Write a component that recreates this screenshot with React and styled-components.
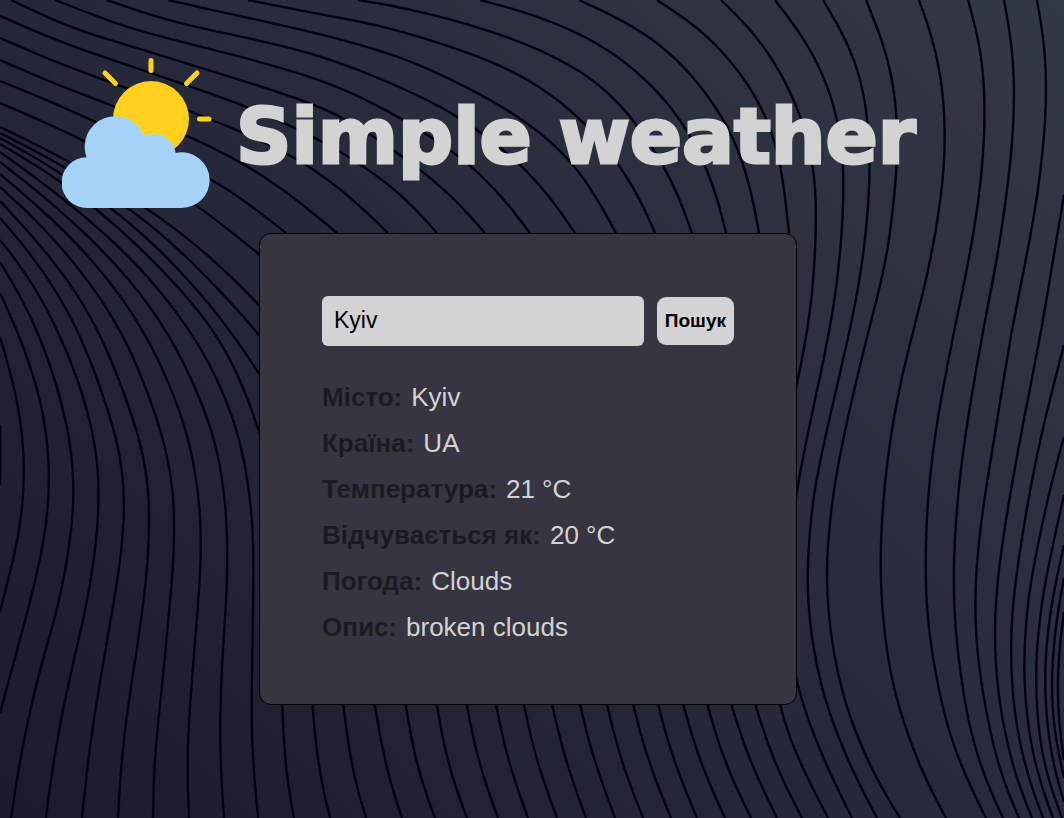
import React, { useState } from "react";
import styled, { createGlobalStyle } from "styled-components";

const GlobalStyle = createGlobalStyle`
  * {
    box-sizing: border-box;
  }
  body {
    margin: 0;
    background: #24263a;
    font-family: "Liberation Sans", Arial, sans-serif;
  }
`;

const Page = styled.main`
  position: relative;
  min-height: 100vh;
  padding: 58px 8px 62px 0;
  overflow: hidden;
`;

const Backdrop = styled.svg`
  position: absolute;
  inset: 0;
  width: 100%;
  height: 100%;
  z-index: -1;
`;

const Header = styled.header`
  display: flex;
  align-items: center;
  gap: 24px;
  padding-left: 62px;
`;

const Logo = styled.svg`
  flex: none;
  width: 150px;
  height: 150px;
`;

const Title = styled.h1`
  margin: 0;
  padding-top: 8px;
  color: lightgray;
  font-family: "DejaVu Sans", sans-serif;
  font-weight: 700;
  font-size: 77px;
  line-height: 112px;
  white-space: nowrap;
  -webkit-text-stroke: 3px lightgray;
`;

const Card = styled.section`
  width: 100%;
  max-width: 538px;
  margin: 25px auto 0;
  padding: 62px 62px 54px;
  background: #363541;
  border: 1px solid #000;
  border-radius: 12px;
`;

const SearchForm = styled.form`
  display: flex;
  align-items: center;
  gap: 13px;
`;

const SearchInput = styled.input`
  flex: 1;
  min-width: 0;
  height: 50px;
  padding: 0 12px 2px;
  background: lightgray;
  border: 0;
  border-radius: 6px;
  color: #000;
  font-family: inherit;
  font-size: 23px;
`;

const SearchButton = styled.button`
  height: 48px;
  padding: 0 8px;
  background: lightgray;
  border: 0;
  border-radius: 9px;
  color: #000;
  font-family: inherit;
  font-weight: 700;
  font-size: 19px;
  cursor: pointer;
`;

const Details = styled.dl`
  margin: 28px 0 0;
  font-size: 26px;
  line-height: 46px;
`;

const Detail = styled.div`
  display: flex;
  flex-wrap: wrap;
  column-gap: 9px;
`;

const Label = styled.dt`
  color: #1a1b22;
  font-weight: 700;
`;

const Value = styled.dd`
  margin: 0;
  color: lightgray;
`;

/* Each contour is a flat list of x, y pairs, joined by a smooth curve. */
const contours = [
  [1064, 195, 1053, 260, 1042, 327, 1030, 388, 1018, 450, 1008, 507, 1004, 530, 996, 590, 994, 647, 998, 697, 1008, 750, 1022, 797, 1032, 818],
  [1037, 0, 1045, 40, 1047, 83, 1045, 133, 1037, 200, 1026, 260, 1013, 323, 1003, 383, 992, 453, 985, 493, 980, 530, 975, 580, 975, 637, 982, 690, 993, 747, 1007, 793, 1019, 818],
  [1004, 0, 1012, 40, 1015, 87, 1013, 140, 1007, 193, 997, 260, 985, 320, 972, 393, 963, 450, 958, 493, 955, 530, 953, 580, 955, 630, 960, 673, 970, 733, 986, 783, 1003, 818],
  [968, 0, 980, 40, 985, 83, 985, 133, 980, 193, 969, 260, 957, 317, 945, 377, 935, 433, 928, 493, 926, 530, 925, 573, 927, 620, 935, 673, 947, 727, 962, 770, 986, 818],
  [919, 0, 933, 37, 942, 77, 946, 130, 943, 187, 931, 260, 917, 317, 903, 370, 893, 420, 885, 477, 881, 530, 880, 567, 882, 613, 888, 663, 898, 707, 912, 747, 930, 790, 946, 818],
  [866, 0, 883, 40, 893, 77, 898, 123, 897, 173, 887, 260, 873, 313, 858, 373, 845, 430, 833, 490, 829, 530, 826, 567, 827, 603, 833, 653, 843, 697, 858, 740, 880, 787, 900, 818],
  [823, 0, 843, 32, 860, 70, 868, 117, 871, 160, 868, 213, 863, 260, 853, 317, 839, 377, 824, 443, 813, 493, 810, 530, 807, 563, 807, 600, 812, 643, 820, 685, 835, 730, 855, 777, 877, 818],
  [775, 0, 800, 31, 820, 65, 833, 100, 841, 130, 844, 167, 844, 200, 840, 260, 833, 313, 820, 377, 807, 437, 797, 487, 790, 540, 786, 590, 788, 640, 797, 687, 815, 740, 835, 784, 852, 818],
  [721, 0, 750, 27, 773, 58, 790, 90, 805, 125, 813, 160, 817, 197, 815, 260, 812, 303, 805, 343, 797, 388, 780, 450, 768, 540, 768, 640, 778, 704, 796, 756, 828, 818],
  [657, 0, 693, 22, 727, 55, 760, 100, 775, 138, 783, 175, 789, 233],
  [579, 0, 620, 18, 660, 43, 693, 75, 727, 122, 742, 157, 752, 190, 759, 233],
  [480, 0, 520, 10, 560, 24, 600, 43, 633, 67, 667, 100, 693, 138, 707, 167, 718, 197, 726, 233],
  [358, 0, 387, 4, 447, 18, 497, 33, 530, 45, 560, 59, 593, 78, 620, 102, 640, 128, 665, 166, 680, 197, 692, 233],
  [248, 0, 313, 13, 380, 25, 447, 45, 497, 63, 530, 80, 560, 100, 590, 127, 620, 165, 640, 197, 655, 233],
  [168, 0, 230, 14, 313, 32, 397, 55, 447, 77, 497, 103, 530, 124, 560, 148, 580, 171, 600, 202, 616, 233],
  [107, 0, 167, 21, 230, 34, 313, 53, 380, 78, 420, 96, 460, 116, 492, 141, 522, 164, 553, 200, 575, 233],
  [55, 0, 127, 28, 230, 54, 297, 72, 350, 91, 412, 124, 471, 164, 503, 197, 530, 233],
  [11, 0, 67, 27, 150, 52, 230, 77, 267, 88, 333, 111, 365, 130, 400, 155, 425, 172, 457, 200, 485, 233],
  [0, 16, 60, 42, 133, 67, 230, 100, 290, 125, 345, 153, 403, 194, 437, 233],
  [0, 38, 50, 60, 115, 84, 187, 110, 230, 127, 267, 143, 297, 158, 320, 173, 357, 202, 388, 233],
  [0, 60, 50, 82, 113, 106, 187, 135, 230, 156, 263, 175, 300, 202, 337, 233],
  [0, 81, 50, 101, 95, 122, 160, 150, 230, 190, 260, 212, 286, 233],
  [0, 103, 40, 120, 83, 140, 150, 174, 197, 205, 229, 230, 260, 255],
  [0, 127, 30, 141, 62, 158, 120, 190, 178, 230, 222, 267, 260, 306],
  [0, 133, 40, 153, 80, 176, 120, 202, 158, 230, 194, 264, 230, 301, 260, 336],
  [0, 138, 35, 157, 70, 179, 105, 203, 139, 230, 175, 265, 215, 310, 240, 344, 260, 375],
  [0, 144, 30, 161, 60, 181, 92, 205, 121, 230, 157, 264, 199, 310, 225, 347, 245, 390, 260, 434],
  [0, 152, 50, 188, 101, 230, 136, 263, 173, 306, 203, 350, 222, 388, 241, 440, 251, 500, 254, 547, 253, 610, 252, 677, 251, 727, 254, 777, 258, 818],
  [0, 162, 40, 193, 82, 230, 115, 263, 151, 306, 178, 350, 196, 388, 216, 440, 226, 500, 228, 553, 226, 610, 222, 660, 220, 710, 220, 760, 224, 818],
  [0, 174, 32, 201, 64, 230, 95, 263, 129, 306, 156, 353, 173, 392, 190, 440, 200, 500, 202, 543, 199, 593, 193, 667, 188, 730, 187, 777, 189, 818],
  [0, 187, 24, 208, 46, 230, 75, 263, 107, 306, 131, 350, 147, 390, 166, 445, 175, 500, 174, 560, 168, 623, 162, 687, 156, 740, 153, 787, 153, 818],
  [0, 201, 27, 230, 55, 262, 86, 306, 109, 353, 123, 390, 141, 440, 150, 490, 149, 553, 142, 617, 132, 680, 125, 727, 120, 777, 118, 818],
  [0, 218, 9, 227, 36, 260, 66, 306, 87, 350, 101, 390, 117, 436, 125, 480, 125, 510, 122, 553, 113, 607, 102, 670, 92, 730, 85, 787, 82, 818],
  [0, 240, 17, 260, 36, 288, 53, 320, 75, 370, 88, 410, 97, 450, 100, 490, 99, 510, 95, 557, 85, 613, 73, 663, 60, 723, 50, 783, 46, 818],
  [0, 262, 28, 308, 50, 363, 63, 407, 72, 447, 75, 490, 74, 510, 68, 557, 57, 613, 43, 657, 27, 723, 17, 777, 11, 818],
  [0, 293, 23, 343, 37, 387, 46, 423, 50, 470, 49, 510, 42, 553, 30, 603, 17, 650, 0, 713],
  [0, 337, 13, 380, 21, 417, 25, 463, 23, 510, 17, 547, 8, 580, 0, 612],
  [0, 425, 1, 450, 0, 485],
  [1064, 345, 1047, 410, 1035, 463, 1023, 530, 1013, 597, 1010, 653, 1013, 707, 1022, 757, 1035, 800, 1043, 818],
  [1064, 437, 1050, 487, 1041, 530, 1028, 593, 1023, 663, 1026, 717, 1035, 767, 1047, 805, 1053, 818],
  [1064, 495, 1056, 530, 1042, 597, 1035, 663, 1037, 723, 1045, 773, 1062, 818],
  [1064, 545, 1052, 597, 1044, 663, 1046, 720, 1053, 767, 1064, 802],
  [1064, 578, 1057, 613, 1051, 670, 1052, 723, 1064, 778],
  [1064, 612, 1058, 653, 1057, 693, 1059, 730, 1064, 760],
  [282, 700, 284, 750, 288, 790, 294, 818],
  [312, 700, 316, 750, 321, 784, 330, 818],
  [343, 700, 347, 740, 355, 784, 366, 818],
  [374, 700, 381, 744, 390, 784, 402, 818],
  [405, 700, 413, 750, 422, 784, 435, 818],
  [436, 700, 443, 744, 453, 782, 467, 818],
  [466, 700, 473, 741, 484, 781, 498, 818],
  [495, 700, 503, 741, 514, 781, 528, 818],
  [523, 700, 531, 741, 542, 778, 557, 818],
  [551, 700, 560, 741, 571, 778, 586, 818],
  [579, 700, 588, 741, 600, 778, 615, 818],
  [606, 700, 615, 741, 627, 778, 643, 818],
  [632, 700, 642, 741, 654, 778, 671, 818],
  [657, 700, 667, 741, 680, 778, 697, 818],
  [682, 700, 693, 741, 706, 778, 725, 818],
  [706, 700, 717, 741, 731, 778, 751, 818],
  [730, 700, 742, 741, 757, 778, 777, 818],
  [754, 700, 766, 741, 781, 778, 802, 818],
];

/* Splits a contour into short even steps, then evens out its bends. */
function relax(flat) {
  let points = [[flat[0], flat[1]]];
  for (let i = 2; i < flat.length; i += 2) {
    const [x0, y0, x1, y1] = flat.slice(i - 2, i + 2);
    const steps = Math.max(1, Math.round(Math.hypot(x1 - x0, y1 - y0) / 10));
    for (let s = 1; s <= steps; s += 1) {
      points.push([x0 + ((x1 - x0) * s) / steps, y0 + ((y1 - y0) * s) / steps]);
    }
  }
  for (let pass = 0; pass < 14; pass += 1) {
    points = points.map((p, i) => {
      const before = points[i - 1];
      const after = points[i + 1];
      if (!before || !after) return p;
      return [(before[0] + 2 * p[0] + after[0]) / 4, (before[1] + 2 * p[1] + after[1]) / 4];
    });
  }
  return points;
}

function smoothPath(flat) {
  return "M" + relax(flat).map(([x, y]) => `${x.toFixed(1)} ${y.toFixed(1)}`).join("L");
}

const contourPaths = contours.map(smoothPath);

function ContourBackdrop() {
  return (
    <Backdrop viewBox="0 0 1064 818" preserveAspectRatio="xMidYMid slice" aria-hidden="true">
      <defs>
        <linearGradient id="night" gradientUnits="userSpaceOnUse" x1="60" y1="878" x2="1004" y2="-60">
          <stop offset="0" stopColor="#1a1b2d" />
          <stop offset="1" stopColor="#333846" />
        </linearGradient>
      </defs>
      <rect width="1064" height="818" fill="url(#night)" />
      <g fill="none" stroke="#000012" strokeWidth="2.4" strokeLinejoin="round">
        {contourPaths.map((d) => (
          <path key={d} d={d} />
        ))}
      </g>
    </Backdrop>
  );
}

function WeatherLogo() {
  return (
    <Logo viewBox="0 0 150 150" aria-hidden="true">
      <g stroke="#ffd01f" strokeWidth="5" strokeLinecap="round">
        <path d="M89 2.500V12.500M43 15L53.500 25.500M135 15L124.500 25.500M137.500 61H147" />
      </g>
      <circle cx="89" cy="61" r="38" fill="#ffd01f" />
      <path
        fill="#a4d3f7"
        d="M25.500 150A25.400 25.400 0 0 1 24.500 99.200A30.500 30.500 0 0 1 82 78.300A22 22 0 0 1 113.700 95A28 28 0 0 1 147.700 122A28 28 0 0 1 119.700 150Z"
      />
    </Logo>
  );
}

const weather = [
  ["Місто:", "Kyiv"],
  ["Країна:", "UA"],
  ["Температура:", "21 °C"],
  ["Відчувається як:", "20 °C"],
  ["Погода:", "Clouds"],
  ["Опис:", "broken clouds"],
];

export default function App() {
  const [city, setCity] = useState("Kyiv");

  return (
    <>
      <GlobalStyle />
      <Page>
        <ContourBackdrop />
        <Header>
          <WeatherLogo />
          <Title>Simple weather</Title>
        </Header>
        <Card>
          <SearchForm onSubmit={(event) => event.preventDefault()}>
            <SearchInput
              type="text"
              aria-label="Місто"
              value={city}
              onChange={(event) => setCity(event.target.value)}
            />
            <SearchButton type="submit">Пошук</SearchButton>
          </SearchForm>
          <Details>
            {weather.map(([label, value]) => (
              <Detail key={label}>
                <Label>{label}</Label>
                <Value>{value}</Value>
              </Detail>
            ))}
          </Details>
        </Card>
      </Page>
    </>
  );
}
